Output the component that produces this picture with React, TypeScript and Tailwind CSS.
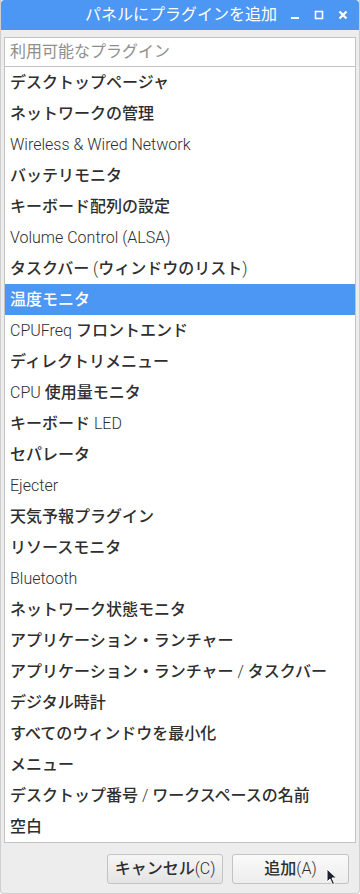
import React from "react"

const ITEMS = [
	"デスクトップページャ",
	"ネットワークの管理",
	"Wireless & Wired Network",
	"バッテリモニタ",
	"キーボード配列の設定",
	"Volume Control (ALSA)",
	"タスクバー (ウィンドウのリスト)",
	"温度モニタ",
	"CPUFreq フロントエンド",
	"ディレクトリメニュー",
	"CPU 使用量モニタ",
	"キーボード LED",
	"セパレータ",
	"Ejecter",
	"天気予報プラグイン",
	"リソースモニタ",
	"Bluetooth",
	"ネットワーク状態モニタ",
	"アプリケーション・ランチャー",
	"アプリケーション・ランチャー / タスクバー",
	"デジタル時計",
	"すべてのウィンドウを最小化",
	"メニュー",
	"デスクトップ番号 / ワークスペースの名前",
	"空白",
]

const SELECTED = 7

const font = "font-['Roboto','Noto_Sans_CJK_JP',sans-serif]"

// latin runs look thin, kana/kanji look heavier in the reference
function Mixed({ text }: { text: string }) {
	const parts = text.split(/([\x00-\x7F]+)/).filter(Boolean)
	return (
		<>
			{parts.map((p, i) =>
				/^[\x00-\x7F]+$/.test(p) ? (
					<span key={i} className="font-light">{p}</span>
				) : (
					<span key={i} className="font-medium">{p}</span>
				)
			)}
		</>
	)
}

function TitleBar() {
	return (
		<div className="flex h-[30px] items-center rounded-t-[4px] bg-[#4c97f3] text-white">
			<div className="flex-1 whitespace-nowrap pl-[84px] text-[16px] leading-none">パネルにプラグインを追加</div>
			<div className="flex items-center gap-[14px] pr-[11px]">
				<svg width="10" height="10" viewBox="0 0 10 10">
					<rect x="1" y="7" width="8" height="2" fill="white" />
				</svg>
				<svg width="10" height="10" viewBox="0 0 10 10">
					<rect x="1.5" y="1.5" width="7" height="7" fill="none" stroke="white" strokeWidth="1.6" />
				</svg>
				<svg width="10" height="10" viewBox="0 0 10 10">
					<path d="M1.5 1.5 L8.5 8.5 M8.5 1.5 L1.5 8.5" stroke="white" strokeWidth="2.2" />
				</svg>
			</div>
		</div>
	)
}

function Cursor() {
	return (
		<svg className="absolute left-[326px] top-[868px]" width="12" height="18" viewBox="0 0 12 18">
			<path d="M1 1 L1 14 L4 11 L6.5 16.5 L8.5 15.5 L6 10 L10.5 10 Z" fill="#1e2233" stroke="white" strokeWidth="1" />
		</svg>
	)
}

export default function App() {
	return (
		<div className={`relative h-[894px] w-[360px] ${font}`}>
			<div className="flex h-full flex-col rounded-b-[4px] border-x border-b border-[#cfcfcf] bg-[#ededed]">
				<TitleBar />
				<div className="px-[3px] pt-[7px]">
					<div className="flex h-[30px] items-center border border-[#c3c3c3] bg-white pl-[5px] text-[16px] text-[#8e8e8e]">
						利用可能なプラグイン
					</div>
					<div className="border-x border-b border-[#c3c3c3] bg-white">
						{ITEMS.map((item, i) => (
							<div
								key={item}
								className={
									i === SELECTED
										? "flex h-[31px] items-center whitespace-pre bg-[#4c97f3] pl-[5px] text-[16px] text-white"
										: "flex h-[31px] items-center whitespace-pre pl-[5px] text-[16px] text-[#2e2e2e]"
								}
							>
								<span><Mixed text={item} /></span>
							</div>
						))}
					</div>
				</div>
				<div className="flex justify-end gap-[9px] pr-[10px] pt-[11px]">
					<button className="h-[30px] w-[116px] rounded-[3px] border border-[#c3c3c3] bg-gradient-to-b from-[#f6f6f6] to-[#e4e4e4] text-[16px] text-[#2e2e2e]">
						<Mixed text="キャンセル(C)" />
					</button>
					<button className="h-[30px] w-[117px] rounded-[3px] border border-[#c3c3c3] bg-gradient-to-b from-[#fafafa] to-[#ededed] text-[16px] text-[#2e2e2e]">
						<Mixed text="追加(A)" />
					</button>
				</div>
			</div>
			<Cursor />
		</div>
	)
}
